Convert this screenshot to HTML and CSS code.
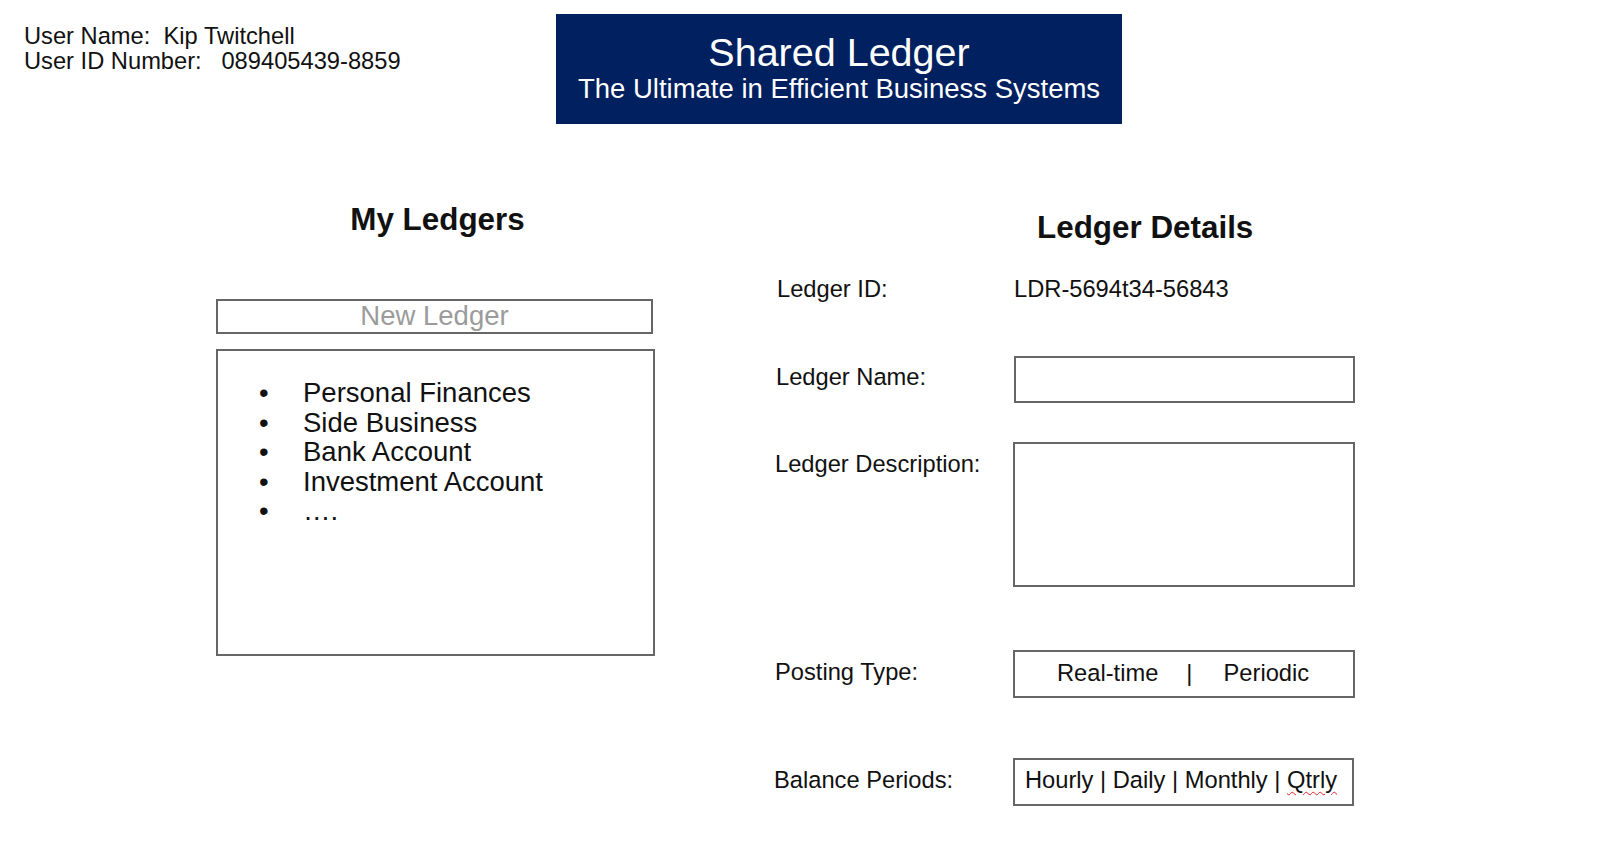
FILE: index.html
```html
<!DOCTYPE html>
<html lang="en">
<head>
<meta charset="utf-8">
<title>Shared Ledger</title>
<link rel="stylesheet" href="styles.css">
</head>
<body>
<div class="top">
  <div class="user-info">
    <div class="user-line">User Name:  Kip Twitchell</div>
    <div class="user-line">User ID Number:   089405439-8859</div>
  </div>
  <div class="banner">
    <div class="banner-title">Shared Ledger</div>
    <div class="banner-sub">The Ultimate in Efficient Business Systems</div>
  </div>
</div>
<div class="main">
  <section class="ledgers">
    <h2 class="section-title ledgers-title">My Ledgers</h2>
    <div class="new-ledger">New Ledger</div>
    <div class="ledger-list">
      <ul class="list">
        <li class="list-item"><span class="bullet">•</span><span>Personal Finances</span></li>
        <li class="list-item"><span class="bullet">•</span><span>Side Business</span></li>
        <li class="list-item"><span class="bullet">•</span><span>Bank Account</span></li>
        <li class="list-item"><span class="bullet">•</span><span>Investment Account</span></li>
        <li class="list-item"><span class="bullet">•</span><span>….</span></li>
      </ul>
    </div>
  </section>
  <section class="details">
    <h2 class="section-title details-title">Ledger Details</h2>
    <div class="row row-id">
      <div class="label">Ledger ID:</div>
      <div class="value">LDR-5694t34-56843</div>
    </div>
    <div class="row row-name">
      <div class="label">Ledger Name:</div>
      <div class="field field-name"></div>
    </div>
    <div class="row row-desc">
      <div class="label">Ledger Description:</div>
      <div class="field field-desc"></div>
    </div>
    <div class="row row-posting">
      <div class="label">Posting Type:</div>
      <div class="field field-posting"><span>Real-time</span><span class="sep">|</span><span>Periodic</span></div>
    </div>
    <div class="row row-balance">
      <div class="label">Balance Periods:</div>
      <div class="field field-balance">Hourly | Daily | Monthly | <span class="misspelled">Qtrly</span></div>
    </div>
  </section>
</div>
</body>
</html>
```

FILE: styles.css
```css
html, body {
  margin: 0;
  padding: 0;
  background: #ffffff;
}

body {
  font-family: "Liberation Sans", Arial, sans-serif;
  color: #111111;
  width: 1622px;
  height: 848px;
  overflow: hidden;
}

.top {
  display: flex;
  align-items: flex-start;
  padding: 14px 0 0 24px;
}

.user-info {
  width: 532px;
  flex: none;
  margin-top: 10px;
  font-size: 23.7px;
  line-height: 25px;
}

.user-line {
  white-space: pre;
}

.banner {
  width: 566px;
  height: 110px;
  flex: none;
  box-sizing: border-box;
  padding-top: 18px;
  background: #002060;
  color: #ffffff;
  text-align: center;
}

.banner-title {
  font-size: 39.5px;
  line-height: 40px;
}

.banner-sub {
  font-size: 27.5px;
  line-height: 30px;
  margin-top: 2px;
}

.main {
  display: flex;
  align-items: flex-start;
}

.section-title {
  margin: 0;
  font-size: 31.4px;
  font-weight: 700;
  line-height: 36px;
}

.ledgers {
  margin-left: 216px;
  width: 439px;
  flex: none;
}

.ledgers-title {
  margin-top: 78px;
  padding-left: 4px;
  text-align: center;
}

.new-ledger {
  margin-top: 61px;
  width: 437px;
  height: 35px;
  box-sizing: border-box;
  border: 2px solid #666666;
  font-size: 27.5px;
  line-height: 29px;
  color: #9b9b9b;
  text-align: center;
}

.ledger-list {
  margin-top: 15px;
  height: 307px;
  box-sizing: border-box;
  border: 2px solid #666666;
  padding: 27px 0 0 41px;
}

.list {
  margin: 0;
  padding: 0;
  list-style: none;
  font-size: 27.5px;
  line-height: 29.5px;
}

.list-item {
  display: flex;
}

.bullet {
  width: 44px;
  flex: none;
}

.details {
  margin-left: 122px;
  width: 578px;
  flex: none;
  font-size: 23.7px;
  line-height: 26px;
}

.details-title {
  margin-top: 86px;
  padding-left: 260px;
}

.row {
  display: flex;
  align-items: flex-start;
}

.label {
  width: 236px;
  flex: none;
}

.value {
  padding-left: 1px;
}

.row-id {
  margin-top: 30px;
}

.row-name {
  margin-top: 54px;
}

.row-name .label {
  margin: 8px 0 0 -1px;
  width: 237px;
}

.row-desc {
  margin-top: 39px;
}

.row-desc .label {
  margin: 9px 0 0 -2px;
  width: 238px;
}

.row-posting {
  margin-top: 63px;
}

.row-posting .label {
  margin: 9px 0 0 -2px;
  width: 238px;
}

.row-balance {
  margin-top: 60px;
}

.row-balance .label {
  margin: 9px 0 0 -3px;
  width: 239px;
}

.field {
  width: 342px;
  box-sizing: border-box;
  border: 2px solid #666666;
}

.field-name {
  height: 47px;
  width: 341px;
  margin-left: 1px;
}

.field-desc {
  height: 145px;
}

.field-posting {
  height: 48px;
  display: flex;
  padding: 8px 0 0 42px;
}

.sep {
  margin: 0 31px 0 28px;
}

.field-balance {
  width: 341px;
  height: 48px;
  padding: 7px 0 0 10px;
  white-space: nowrap;
}

.misspelled {
  text-decoration: underline wavy #e8202a;
  text-decoration-thickness: 1px;
  text-underline-offset: 3px;
}
```
